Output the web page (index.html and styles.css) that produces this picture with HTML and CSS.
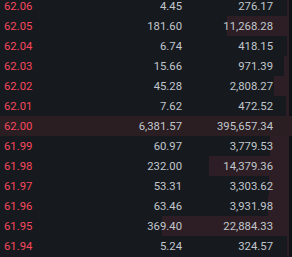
FILE: index.html
```html
<!DOCTYPE html>
<html>
<head>
<meta charset="utf-8">
<link rel="stylesheet" href="styles.css">
</head>
<body>
<div class="book">
  <div class="row" style="--d:2px"><span class="price">62.06</span><span class="amt">4.45</span><span class="tot">276.17</span></div>
  <div class="row" style="--d:62px"><span class="price">62.05</span><span class="amt">181.60</span><span class="tot">11,268.28</span></div>
  <div class="row" style="--d:2px"><span class="price">62.04</span><span class="amt">6.74</span><span class="tot">418.15</span></div>
  <div class="row" style="--d:5px"><span class="price">62.03</span><span class="amt">15.66</span><span class="tot">971.39</span></div>
  <div class="row" style="--d:15px"><span class="price">62.02</span><span class="amt">45.28</span><span class="tot">2,808.27</span></div>
  <div class="row" style="--d:3px"><span class="price">62.01</span><span class="amt">7.62</span><span class="tot">472.52</span></div>
  <div class="row current"><span class="price">62.00</span><span class="amt">6,381.57</span><span class="tot">395,657.34</span></div>
  <div class="row" style="--d:19px"><span class="price">61.99</span><span class="amt">60.97</span><span class="tot">3,779.53</span></div>
  <div class="row" style="--d:80px"><span class="price">61.98</span><span class="amt">232.00</span><span class="tot">14,379.36</span></div>
  <div class="row" style="--d:20px"><span class="price">61.97</span><span class="amt">53.31</span><span class="tot">3,303.62</span></div>
  <div class="row" style="--d:21px"><span class="price">61.96</span><span class="amt">63.46</span><span class="tot">3,931.98</span></div>
  <div class="row" style="--d:127px"><span class="price">61.95</span><span class="amt">369.40</span><span class="tot">22,884.33</span></div>
  <div class="row" style="--d:2px"><span class="price">61.94</span><span class="amt">5.24</span><span class="tot">324.57</span></div>
</div>
</body>
</html>
```
FILE: styles.css
```css
html, body {
  margin: 0;
  padding: 0;
  background: #161a1e;
  overflow: hidden;
}
.book {
  margin-top: -4px;
  width: 292px;
  font-family: Roboto, "Liberation Sans", sans-serif;
  font-size: 11.3px;
  font-weight: 400;
}
.row {
  --d: 0px;
  --bar: #2c1e24;
  box-sizing: border-box;
  height: 20px;
  padding: 2px 16px 0 4px;
  line-height: 18px;
  display: grid;
  grid-template-columns: 60px 118px 91px;
  border-right: 3px solid #0f1215;
  background: linear-gradient(to left, var(--bar) var(--d), transparent var(--d));
}
.row.current {
  background: #2a1e22;
  border-right-color: #2a1e22;
}
.price {
  color: #f6465d;
}
.amt, .tot {
  color: #c1c6cd;
  text-align: right;
}
```
